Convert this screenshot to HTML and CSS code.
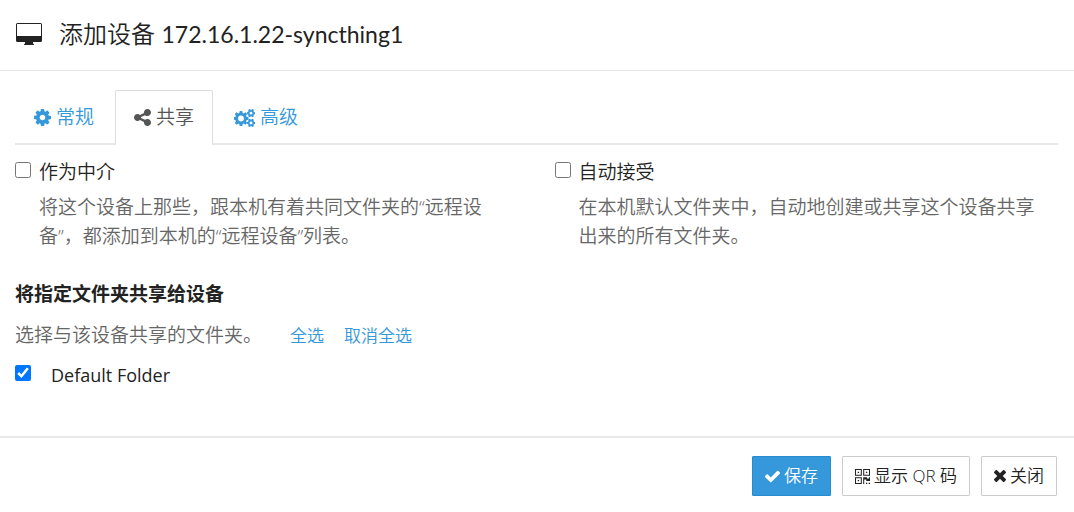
FILE: index.html
```html
<!DOCTYPE html>
<html lang="zh-CN">
<head>
<meta charset="utf-8">
<meta name="viewport" content="width=device-width, initial-scale=1">
<title>添加设备</title>
<link rel="stylesheet" href="styles.css">
</head>
<body>
<svg class="sprite" aria-hidden="true">
  <symbol id="cog" viewBox="128 128 1536 1536"><path d="M1152 896q0-106-75-181t-181-75-181 75-75 181 75 181 181 75 181-75 75-181zm512-109v222q0 12-8 23t-20 13l-185 28q-19 54-39 91 35 50 107 138 10 12 10 25t-9 23q-27 37-99 108t-94 71q-12 0-26-9l-138-108q-44 23-91 38-16 136-29 186-7 28-36 28h-222q-14 0-24.500-8.500t-11.500-21.500l-28-184q-49-16-90-37l-141 107q-10 9-25 9-14 0-25-11-126-114-165-168-7-10-7-23 0-12 8-23 15-21 51-66.500t54-70.500q-27-50-41-99l-183-27q-13-2-21-12.500t-8-23.500v-222q0-12 8-23t19-13l186-28q14-46 39-92-40-57-107-138-10-12-10-24 0-10 9-23 26-36 98.500-107.500t94.500-71.500q13 0 26 10l138 107q44-23 91-38 16-136 29-186 7-28 36-28h222q14 0 24.500 8.500t11.500 21.500l28 184q49 16 90 37l142-107q9-9 24-9 13 0 25 10 129 119 165 170 7 8 7 22 0 12-8 23-15 21-51 66.500t-54 70.500q26 50 41 98l183 28q13 2 21 12.500t8 23.500z"/></symbol>
</svg>
<main class="dialog">
  <header class="dialog-header">
    <svg class="icon-desktop" viewBox="0 0 26 22" aria-hidden="true"><path fill-rule="evenodd" d="M1.500 0h23Q26 0 26 1.500v16Q26 19 24.500 19H17v1.500q1 0 1 1.500H8q0-1.500 1-1.500V19H1.500Q0 19 0 17.500V1.500Q0 0 1.500 0zM1 1v12h24V1z"/></svg>
    <h1 class="dialog-title">添加设备 <span class="device-name">172.16.1.22-syncthing1</span></h1>
  </header>

  <div class="dialog-body">
    <nav class="tabs">
      <a class="tab" href="#general"><svg class="icon" aria-hidden="true"><use href="#cog"/></svg>常规</a>
      <a class="tab tab-active" href="#sharing" aria-current="page"><svg class="icon" viewBox="128 128 1536 1536" aria-hidden="true"><path d="M1344 1024q133 0 226.500 93.500t93.500 226.500-93.500 226.500-226.500 93.500-226.500-93.500-93.500-226.500q0-12 2-34l-360-180q-92 86-218 86-133 0-226.500-93.500t-93.500-226.500 93.500-226.500 226.500-93.500q126 0 218 86l360-180q-2-22-2-34 0-133 93.500-226.500t226.500-93.500 226.500 93.500 93.500 226.500-93.500 226.500-226.500 93.500q-126 0-218-86l-360 180q2 22 2 34t-2 34l360 180q92-86 218-86z"/></svg>共享</a>
      <a class="tab" href="#advanced"><svg class="icon icon-wide" viewBox="0 0 21 18" aria-hidden="true"><path fill-rule="evenodd" d="M5.700 2h2.600l.4 2 1 .4 1.700-1.100 1.800 1.800L12.100 6.800l.4 1 2 .4v2.600l-2 .4-.4 1 1.100 1.700-1.800 1.800-1.700-1.100-1 .4-.4 2H5.700l-.4-2-1-.4-1.700 1.100L.8 13.900l1.100-1.700-.4-1L0 10.800V8.200l1.500-.4.400-1L.8 5.100l1.800-1.800 1.700 1.100 1-.4zM7 6.600a2.900 2.900 0 1 0 0 5.800a2.900 2.900 0 1 0 0-5.800z"/><path fill-rule="evenodd" d="M15.600 0l1.400.9L18.400 0l1.300.8-.1 1.700 1.400.9v1.500l-1.400.8.1 1.700-1.300.8-1.400-1-1.400 1-1.300-.8.100-1.700-1.400-.8V3.400l1.400-.9-.1-1.700zM17 2.700a1.450 1.450 0 1 0 0 2.900a1.450 1.450 0 1 0 0-2.900zM15.600 9.800l1.400.9 1.400-.9 1.300.8-.1 1.700 1.400.9v1.500l-1.400.8.1 1.700-1.300.8-1.400-1-1.400 1-1.300-.8.100-1.700-1.400-.8v-1.500l1.400-.9-.1-1.700zM17 12.500a1.450 1.450 0 1 0 0 2.900a1.450 1.450 0 1 0 0-2.900z"/></svg>高级</a>
    </nav>

    <div class="options">
      <section class="option">
        <input class="checkbox" type="checkbox" id="introducer" aria-describedby="introducer-help">
        <label for="introducer">作为中介</label>
        <p class="help option-help" id="introducer-help">将这个设备上那些，跟本机有着共同文件夹的“远程设备”，都添加到本机的“远程设备”列表。</p>
      </section>
      <section class="option">
        <input class="checkbox" type="checkbox" id="autoaccept" aria-describedby="autoaccept-help">
        <label for="autoaccept">自动接受</label>
        <p class="help option-help" id="autoaccept-help">在本机默认文件夹中，自动地创建或共享这个设备共享出来的所有文件夹。</p>
      </section>
    </div>

    <section class="folders">
      <h2 class="folders-title">将指定文件夹共享给设备</h2>
      <div class="folders-intro">
        <p class="help">选择与该设备共享的文件夹。</p>
        <a class="small-link" href="#select-all">全选</a>
        <a class="small-link" href="#deselect-all">取消全选</a>
      </div>
      <div class="folder">
        <input class="checkbox" type="checkbox" id="default-folder" checked>
        <label class="folder-name" for="default-folder">Default Folder</label>
      </div>
    </section>
  </div>

  <footer class="dialog-footer">
    <button class="button button-primary" type="button"><svg class="icon-small" viewBox="121 334 1550 1188" aria-hidden="true"><path d="M1671 566q0 40-28 68l-724 724-136 136q-28 28-68 28t-68-28l-136-136-362-362q-28-28-28-68t28-68l136-136q28-28 68-28t68 28l294 295 656-657q28-28 68-28t68 28l136 136q28 28 28 68z"/></svg>保存</button>
    <button class="button" type="button"><svg class="icon-small" viewBox="0 0 22 22" aria-hidden="true"><path fill-rule="evenodd" d="M0 0h10v10H0zM1.500 1.500v7h7v-7zM4 4h2v2H4zM12 0h10v10H12zM13.500 1.500v7h7v-7zM16 4h2v2h-2zM0 12h10v10H0zM1.500 13.500v7h7v-7zM4 16h2v2H4zM12 12h5.500v2h3v-2H22v5.500h-5.500v-2h-3V22H12zM16 20h2v2h-2zM20 20h2v2h-2z"/></svg>显示 QR 码</button>
    <button class="button" type="button"><svg class="icon-times" viewBox="302 366 1188 1188" aria-hidden="true"><path d="M1490 1322q0 40-28 68l-136 136q-28 28-68 28t-68-28l-294-294-294 294q-28 28-68 28t-68-28l-136-136q-28-28-28-68t28-68l294-294-294-294q-28-28-28-68t28-68l136-136q28-28 68-28t68 28l294 294 294-294q28-28 68-28t68 28l136 136q28 28 28 68t-28 68l-294 294 294 294q28 28 28 68z"/></svg>关闭</button>
  </footer>
</main>
</body>
</html>
```
FILE: styles.css
```css
* {
  box-sizing: border-box;
}

body {
  margin: 0;
  background: #fff;
  color: #222;
  font-family: "Open Sans", "Noto Sans CJK SC", sans-serif;
  font-size: 19px;
  font-weight: 350;
  line-height: 29px;
}

h1, h2, p {
  margin: 0;
}

a {
  color: #3498db;
  text-decoration: none;
}

svg {
  fill: currentColor;
  flex: none;
}

.sprite {
  display: none;
}

.dialog-header {
  display: flex;
  align-items: center;
  gap: 17px;
  padding: 15px 16px 17px;
  border-bottom: 1px solid #e5e5e5;
}

.icon-desktop {
  width: 26px;
  height: 22px;
}

.dialog-title {
  font-family: Lato, "Noto Sans CJK SC", sans-serif;
  font-size: 24px;
  font-weight: 350;
  line-height: 38px;
}

.device-name {
  font-size: 23px;
  font-weight: 400;
}

.dialog-body {
  padding: 19px 16px 46px 15px;
}

.tabs {
  display: flex;
  gap: 2px;
  border-bottom: 2px solid #e8e8e8;
}

.tab {
  display: flex;
  align-items: center;
  gap: 5px;
  padding: 12px 18px 11px;
  border: 1px solid transparent;
  border-bottom: 0;
}

.tab-active {
  margin-bottom: -2px;
  padding-bottom: 13px;
  border-color: #ddd;
  border-radius: 2px 2px 0 0;
  background: #fff;
  color: #555;
}

.icon {
  width: 17px;
  height: 17px;
}

.icon-wide {
  width: 21px;
  height: 18px;
}

.options {
  display: grid;
  grid-template-columns: 1fr 1fr;
  gap: 36px;
  padding-top: 13px;
}

.option {
  display: grid;
  grid-template-columns: 16px 1fr;
  column-gap: 8px;
  row-gap: 6px;
}

.checkbox {
  width: 16px;
  height: 16px;
  margin: 4px 0 0;
  accent-color: #0075ff;
}

.help {
  color: #666;
}

.option-help {
  grid-column: 2;
  padding-right: 16px;
}

.folders {
  padding-top: 29px;
}

.folders-title {
  font-size: 19px;
  font-weight: 700;
}

.folders-intro {
  display: flex;
  align-items: center;
  gap: 20px;
  padding: 12px 0 11px;
}

.folders-intro .help {
  padding-right: 8px;
}

.small-link {
  font-size: 17px;
}

.folder {
  display: flex;
  gap: 20px;
}

.folder-name {
  font-family: "Open Sans", sans-serif;
  font-size: 18px;
  font-weight: 400;
}

.dialog-footer {
  display: flex;
  justify-content: flex-end;
  gap: 11px;
  padding: 18px 17px 15px;
  border-top: 2px solid #e8e8e8;
}

.button {
  display: flex;
  align-items: center;
  gap: 4px;
  padding: 5px 12px;
  border: 1px solid #ccc;
  border-radius: 1px;
  background: #fff;
  color: #222;
  font: inherit;
  font-size: 17px;
  line-height: 28px;
}

.button-primary {
  border-color: #258cd1;
  background: #3498db;
  color: #fff;
}

.icon-small {
  width: 15px;
  height: 15px;
}

.icon-times {
  width: 12px;
  height: 12px;
}
```
